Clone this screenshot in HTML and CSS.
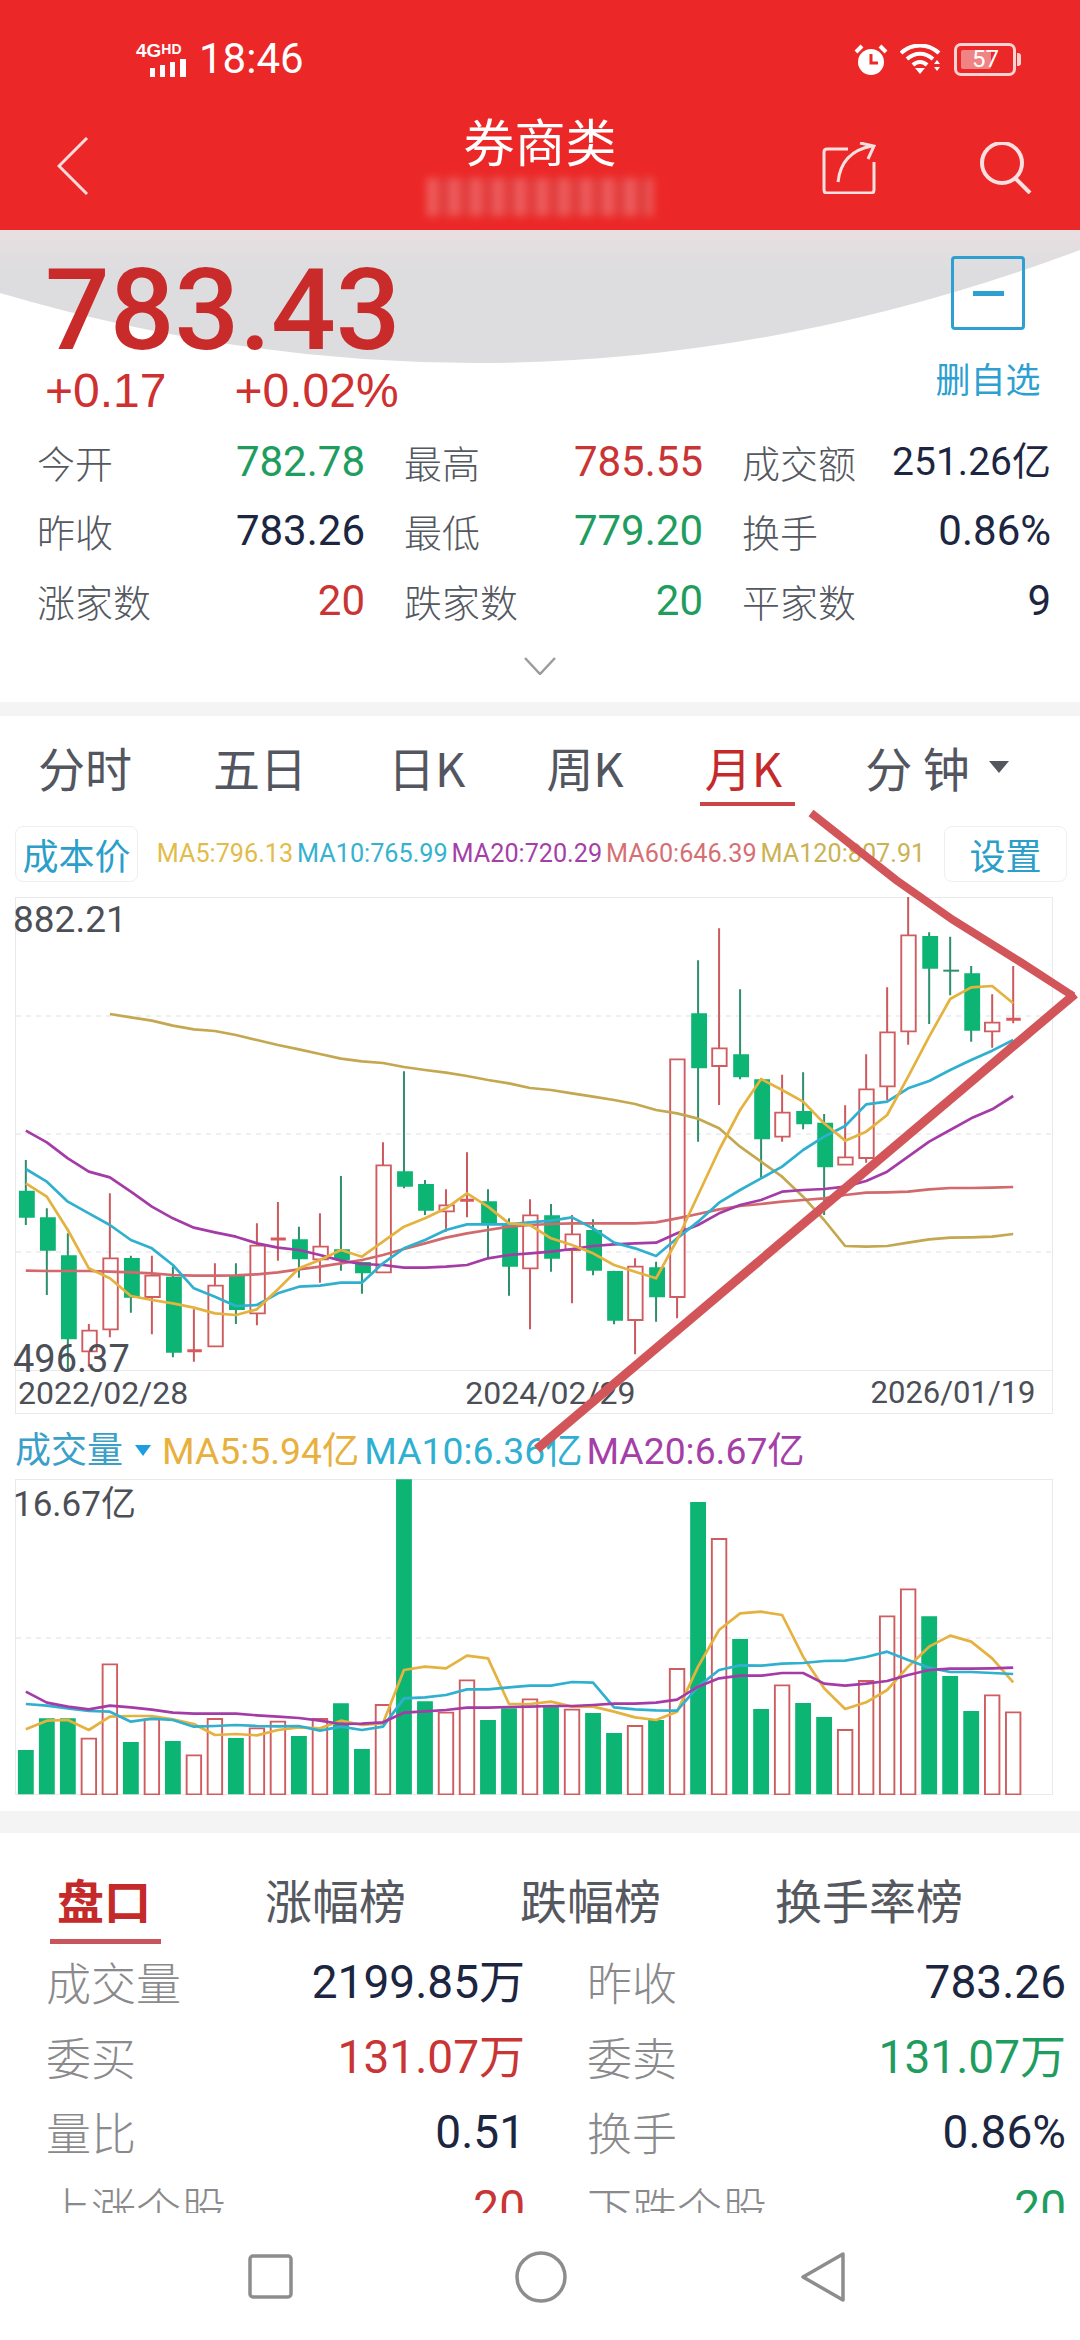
FILE: index.html
```html
<!DOCTYPE html>
<html lang="zh-CN">
<head>
<meta charset="utf-8">
<title>券商类</title>
<link rel="stylesheet" href="styles.css">
</head>
<body>
<div class="page">
  <header class="appbar">
    <div class="status">
      <div class="status-left">
        <div class="net">
          <span class="net-text">4G<sup class="net-hd">HD</sup></span>
          <svg class="bars" width="36" height="18" viewBox="0 0 36 18"><path d="M0 9h5v9H0zM10 6h5v12h-5zM20 3h5v15h-5zM30 0h6v18h-6z" fill="#fff"/></svg>
        </div>
        <span class="time">18:46</span>
      </div>
      <div class="status-right">
        <svg width="34" height="32" viewBox="0 0 34 32"><circle cx="17" cy="18" r="13" fill="#fff"/><path d="M17 10v9h7" fill="none" stroke="#ee2828" stroke-width="3"/><path d="M2 8 8 2M32 8 26 2" stroke="#fff" stroke-width="4"/></svg>
        <svg width="42" height="30" viewBox="0 0 42 30"><path d="M1 9C12-1 28-1 39 9M7 15c8-7 18-7 26 0M13 21c4-4 10-4 14 0" fill="none" stroke="#fff" stroke-width="4"/><path d="M15 24h10l-5 6z" fill="#fff"/><path d="M34 20l3-4 3 4zM34 23l3 4 3-4z" fill="#fff"/></svg>
        <div class="battery"><span class="battery-fill"></span><span class="battery-num">57</span></div>
      </div>
    </div>
    <div class="nav">
      <svg class="nav-back" width="32" height="58" viewBox="0 0 32 58"><path d="M30 1 2 29l28 28" fill="none" stroke="#f6dcdc" stroke-width="3"/></svg>
      <div class="nav-title">
        <h1 class="title">券商类</h1>
        <div class="smudge"></div>
      </div>
      <div class="nav-actions">
        <svg width="54" height="52" viewBox="0 0 54 52"><path d="M26 7H5Q2 7 2 10v38q0 3 3 3h44q3 0 3-3V20M16 40C18 22 28 8 50 4" fill="none" stroke="#f8e0e0" stroke-width="3"/><path d="M38 1l14 3-6 13" fill="none" stroke="#f8e0e0" stroke-width="3"/></svg>
        <svg width="52" height="52" viewBox="0 0 52 52"><circle cx="22" cy="21" r="20" fill="none" stroke="#f8e0e0" stroke-width="4"/><path d="M35 36l15 15" stroke="#f8e0e0" stroke-width="4"/></svg>
      </div>
    </div>
  </header>

  <section class="quote">
    <svg class="swoosh" width="1080" height="140" viewBox="0 0 1080 140">
      <defs><linearGradient id="sw" x1="0" y1="0" x2="0" y2="1"><stop offset="0" stop-color="#e9dfe2"/><stop offset=".3" stop-color="#dddddf"/></linearGradient></defs>
      <path d="M0 0H1080V20Q540 222 0 63Z" fill="url(#sw)"/>
    </svg>
    <div class="quote-head">
      <div>
        <div class="price">783.43</div>
        <div class="changes"><span>+0.17</span><span>+0.02%</span></div>
      </div>
      <div class="watch">
        <div class="watch-box"><span class="watch-minus"></span></div>
        <span class="watch-label">删自选</span>
      </div>
    </div>
    <div class="stats">
      <div class="stat"><span class="stat-label">今开</span><span class="stat-val up-g">782.78</span></div>
      <div class="stat"><span class="stat-label">最高</span><span class="stat-val up-r">785.55</span></div>
      <div class="stat"><span class="stat-label">成交额</span><span class="stat-val stat-wide">251.26亿</span></div>
      <div class="stat"><span class="stat-label">昨收</span><span class="stat-val">783.26</span></div>
      <div class="stat"><span class="stat-label">最低</span><span class="stat-val up-g">779.20</span></div>
      <div class="stat"><span class="stat-label">换手</span><span class="stat-val">0.86%</span></div>
      <div class="stat"><span class="stat-label">涨家数</span><span class="stat-val up-r">20</span></div>
      <div class="stat"><span class="stat-label">跌家数</span><span class="stat-val up-g">20</span></div>
      <div class="stat"><span class="stat-label">平家数</span><span class="stat-val">9</span></div>
    </div>
    <svg class="expand" width="32" height="18" viewBox="0 0 32 18"><path d="M1 1l15 16L31 1" fill="none" stroke="#9c9ca0" stroke-width="2.5"/></svg>
  </section>

  <div class="sep sep-a"></div>

  <nav class="tabs">
    <span class="tab">分时</span>
    <span class="tab">五日</span>
    <span class="tab">日K</span>
    <span class="tab">周K</span>
    <span class="tab tab-on">月K</span>
    <span class="tab tab-last">分 钟</span>
    <span class="tab-caret"></span>
  </nav>

  <div class="controls">
    <span class="ctl-btn">成本价</span>
    <div class="legend">
      <span class="c-y">MA5:796.13</span><span class="c-b">MA10:765.99</span><span class="c-p">MA20:720.29</span><span class="c-s">MA60:646.39</span><span class="c-o">MA120:807.91</span>
    </div>
    <span class="ctl-btn">设置</span>
  </div>

  <div class="chart price-chart">
    <svg class="chart-svg" width="1080" height="474" viewBox="0 897 1080 474">
      <rect class="frame" x="15.5" y="897.5" width="1037" height="473"/>
      <path class="dash" d="M16 1016H1052M16 1134H1052M16 1252H1052"/>
      <g transform="translate(0,880) scale(.34439 .33333)">
        <path class="wick-g" d="M75 840V1035M136 985V1245M197 1060V1475M380 1127V1298M502 1160V1432M685 1150V1332M868 1040V1193M990 888V1172M1051 1145V1241M1173 574V925M1234 900V1005M1417 928V1135M1478 1015V1247M1600 972V1175M1722 1018V1186M1783 1172V1333M1905 1145V1325M2027 241V785M2149 328V598M2210 597V895M2332 577V748M2393 702V1005M2698 157V432M2759 170V346M2820 258V485"/>
        <path class="wick-r" d="M258 1332V1460M319 940V1372M441 1127V1363M563 1288V1445M624 1150V1217M746 1030V1336M807 966V1142M929 1000V1208M1112 787V1178M1295 928V1055M1356 817V1012M1539 958V1348M1661 1005V1270M1844 1135V1423M1966 1252V1315M2088 145V675M2271 584V785M2454 676V855M2515 523V848M2576 322V660M2637 50V494M2881 343V503M2942 258V430"/>
        <path class="body-g" d="M55 932h46v81h-46zM116 1012h46v100h-46zM177 1126h46v252h-46zM360 1134h46v119h-46zM482 1190h46v228h-46zM665 1188h46v102h-46zM848 1078h46v60h-46zM970 1108h46v32h-46zM1031 1146h46v34h-46zM1153 874h46v46h-46zM1214 912h46v80h-46zM1397 964h46v66h-46zM1458 1030h46v130h-46zM1580 1006h46v130h-46zM1702 1050h46v122h-46zM1763 1173h46v149h-46zM1885 1162h46v90h-46zM2007 400h46v165h-46zM2129 523h46v69h-46zM2190 598h46v180h-46zM2312 693h46v40h-46zM2373 728h46v134h-46zM2678 168h46v98h-46zM2800 280h46v172h-46z"/>
        <path class="thin-g" d="M2739 272h46"/>
        <path class="body-r" d="M239 1352h42v62h-42zM300 1135h42v213h-42zM422 1187h42v64h-42zM605 1217h42v182h-42zM727 1097h42v203h-42zM910 1100h42v38h-42zM1093 856h42v321h-42zM1276 976h42v18h-42zM1519 1006h42v159h-42zM1642 1063h42v47h-42zM1824 1160h42v160h-42zM1946 538h42v713h-42zM2068 505h42v53h-42zM2251 698h42v72h-42zM2434 832h42v22h-42zM2495 628h42v206h-42zM2556 457h42v162h-42zM2617 166h42v288h-42zM2860 428h42v26h-42z"/>
        <path class="thin-r" d="M544 1412h42M786 1077h44M1336 961h40M2922 418h42"/>
        <polyline class="ma ma-o" points="319,402 380,412 441,422 502,437 563,448 624,453 685,465 746,480 807,495 868,508 929,522 990,536 1051,544 1112,549 1173,561 1234,570 1295,578 1356,588 1417,600 1478,610 1539,624 1600,630 1661,640 1722,650 1783,660 1844,672 1905,690 1966,700 2027,716 2088,745 2149,800 2210,845 2271,890 2332,950 2393,1020 2454,1098 2515,1100 2576,1098 2637,1088 2698,1078 2759,1073 2820,1072 2881,1070 2942,1062"/>
        <polyline class="ma ma-s" points="75,1172 136,1173 197,1173 258,1173 319,1175 380,1177 441,1180 502,1185 563,1187 624,1187 685,1186 746,1183 807,1177 868,1168 929,1160 990,1150 1051,1140 1112,1125 1173,1107 1234,1090 1295,1073 1356,1060 1417,1050 1478,1040 1539,1035 1600,1032 1661,1030 1722,1030 1783,1030 1844,1030 1905,1027 1966,1015 2027,1002 2088,988 2149,978 2210,972 2271,965 2332,960 2393,955 2454,945 2515,938 2576,937 2637,935 2698,928 2759,924 2820,924 2881,923 2942,921"/>
        <polyline class="ma ma-p" points="75,752 136,787 197,835 258,875 319,892 380,935 441,980 502,1015 563,1043 624,1057 685,1070 746,1090 807,1103 868,1110 929,1125 990,1142 1051,1152 1112,1155 1173,1163 1234,1163 1295,1160 1356,1155 1417,1135 1478,1125 1539,1120 1600,1115 1661,1107 1722,1098 1783,1093 1844,1090 1905,1088 1966,1060 2027,1035 2088,1000 2149,975 2210,960 2271,935 2332,930 2393,927 2454,920 2515,903 2576,875 2637,830 2698,785 2759,750 2820,715 2881,688 2942,648"/>
        <polyline class="ma ma-b" points="75,867 136,905 197,965 258,1000 319,1035 380,1080 441,1105 502,1155 563,1225 624,1250 685,1278 746,1275 807,1240 868,1220 929,1217 990,1208 1051,1208 1112,1150 1173,1105 1234,1080 1295,1050 1356,1033 1417,1033 1478,1033 1539,1027 1600,1022 1661,1012 1722,1045 1783,1088 1844,1105 1905,1128 1966,1075 2027,1025 2088,968 2149,930 2210,895 2271,860 2332,810 2393,770 2454,738 2515,673 2576,665 2637,625 2698,603 2759,570 2820,540 2881,512 2942,480"/>
        <polyline class="ma ma-y" points="75,910 136,950 197,1050 258,1165 319,1195 380,1248 441,1260 502,1270 563,1283 624,1300 685,1305 746,1288 807,1228 868,1165 929,1140 990,1110 1051,1130 1112,1085 1173,1040 1234,1015 1295,985 1356,940 1417,980 1478,1030 1539,1035 1600,1075 1661,1095 1722,1120 1783,1155 1844,1175 1905,1195 1966,1080 2027,945 2088,810 2149,690 2210,597 2271,630 2332,665 2393,730 2454,782 2515,755 2576,705 2637,590 2698,470 2759,357 2820,322 2881,318 2942,370"/>
      </g>
    </svg>
    <span class="axis axis-top">882.21</span>
    <span class="axis axis-bottom">496.37</span>
  </div>
  <div class="dates">
    <span>2022/02/28</span><span class="date-mid">2024/02/29</span><span class="date-end">2026/01/19</span>
  </div>

  <div class="vol-head">
    <span class="vol-title">成交量</span>
    <span class="vol-caret"></span>
    <span class="c-y2">MA5:5.94亿</span><span class="c-b2">MA10:6.36亿</span><span class="c-p2">MA20:6.67亿</span>
  </div>
  <div class="chart vol-chart">
    <svg class="chart-svg" width="1080" height="316" viewBox="0 1479 1080 316">
      <rect class="frame" x="15.5" y="1479.5" width="1037" height="315"/>
      <path class="dash" d="M16 1638H1052"/>
      <g transform="translate(0,1400) scale(.34439 .33333)">
        <path class="vol-g" d="M52 1050h46v133h-46zM113 955h46v228h-46zM174 955h46v228h-46zM357 1026h46v157h-46zM479 1023h46v160h-46zM662 1014h46v169h-46zM845 1008h46v175h-46zM967 910h46v273h-46zM1028 1047h46v136h-46zM1150 238h46v945h-46zM1211 904h46v279h-46zM1394 960h46v223h-46zM1455 925h46v258h-46zM1577 917h46v266h-46zM1699 939h46v244h-46zM1760 999h46v184h-46zM1882 960h46v223h-46zM2004 306h46v877h-46zM2126 717h46v466h-46zM2187 927h46v256h-46zM2309 909h46v274h-46zM2370 951h46v232h-46zM2675 649h46v534h-46zM2736 828h46v355h-46zM2797 933h46v250h-46z"/>
        <path class="body-r" d="M237 1016h42v167h-42zM298 793h42v390h-42zM420 958h42v225h-42zM542 1066h42v117h-42zM603 957h42v226h-42zM725 985h42v198h-42zM786 965h42v218h-42zM908 957h42v226h-42zM1091 915h42v268h-42zM1274 938h42v245h-42zM1335 841h42v342h-42zM1518 898h42v285h-42zM1640 929h42v254h-42zM1823 978h42v205h-42zM1945 807h42v376h-42zM2067 417h42v766h-42zM2250 856h42v327h-42zM2433 990h42v193h-42zM2494 843h42v340h-42zM2555 649h42v534h-42zM2616 568h42v615h-42zM2860 886h42v297h-42zM2921 937h42v246h-42z"/>
        <polyline class="ma ma-y" points="75,988 136,962 197,960 258,990 319,950 380,948 441,948 502,958 563,972 624,1005 685,1002 746,1006 807,990 868,982 929,985 990,962 1051,975 1112,970 1173,810 1234,800 1295,805 1356,767 1417,775 1478,912 1539,912 1600,905 1661,920 1722,920 1783,935 1844,952 1905,960 1966,935 2027,800 2088,690 2149,640 2210,635 2271,645 2332,770 2393,865 2454,927 2515,907 2576,870 2637,800 2698,740 2759,707 2820,725 2881,775 2942,847"/>
        <polyline class="ma ma-b" points="75,912 136,917 197,925 258,933 319,935 380,965 441,956 502,960 563,980 624,978 685,975 746,978 807,979 868,978 929,992 990,980 1051,990 1112,980 1173,895 1234,892 1295,885 1356,868 1417,868 1478,862 1539,857 1600,857 1661,846 1722,848 1783,922 1844,928 1905,931 1966,932 2027,860 2088,810 2149,796 2210,797 2271,791 2332,789 2393,783 2454,782 2515,771 2576,755 2637,780 2698,803 2759,816 2820,816 2881,819 2942,822"/>
        <polyline class="ma ma-p" points="75,875 136,908 197,920 258,928 319,917 380,922 441,929 502,938 563,941 624,941 685,941 746,946 807,950 868,954 929,962 990,972 1051,971 1112,967 1173,938 1234,934 1295,930 1356,923 1417,923 1478,921 1539,920 1600,918 1661,918 1722,915 1783,911 1844,911 1905,908 1966,899 2027,860 2088,835 2149,827 2210,827 2271,819 2332,819 2393,851 2454,857 2515,851 2576,843 2637,825 2698,810 2759,806 2820,806 2881,805 2942,803"/>
      </g>
    </svg>
    <span class="axis axis-vol">16.67亿</span>
  </div>

  <div class="sep sep-b"></div>

  <section class="board">
    <nav class="board-tabs">
      <span class="board-tab board-on">盘口</span>
      <span class="board-tab">涨幅榜</span>
      <span class="board-tab">跌幅榜</span>
      <span class="board-tab">换手率榜</span>
    </nav>
    <div class="rows">
      <div class="row"><span class="row-label">成交量</span><span class="row-val">2199.85万</span></div>
      <div class="row"><span class="row-label">昨收</span><span class="row-val">783.26</span></div>
      <div class="row"><span class="row-label">委买</span><span class="row-val up-r">131.07万</span></div>
      <div class="row"><span class="row-label">委卖</span><span class="row-val up-g">131.07万</span></div>
      <div class="row"><span class="row-label">量比</span><span class="row-val">0.51</span></div>
      <div class="row"><span class="row-label">换手</span><span class="row-val">0.86%</span></div>
      <div class="row"><span class="row-label">上涨个股</span><span class="row-val up-r">20</span></div>
      <div class="row"><span class="row-label">下跌个股</span><span class="row-val up-g">20</span></div>
    </div>
  </section>

  <footer class="sysnav">
    <svg width="45" height="45" viewBox="0 0 45 45"><rect x="2" y="2" width="41" height="41" rx="3" fill="none" stroke="#8d8d8d" stroke-width="3.5"/></svg>
    <svg width="52" height="52" viewBox="0 0 52 52"><circle cx="26" cy="26" r="24" fill="none" stroke="#8d8d8d" stroke-width="3.5"/></svg>
    <svg width="46" height="52" viewBox="0 0 46 52"><path d="M43 3 3 26l40 23z" fill="none" stroke="#8d8d8d" stroke-width="3.5" stroke-linejoin="round"/></svg>
  </footer>

  <svg class="marks" width="1080" height="2340" viewBox="0 0 1080 2340">
    <polyline points="811,813 896,880 953,920 1022,963 1073,996" fill="none" stroke="#d2555a" stroke-width="8"/>
    <polyline points="1075,994 537,1449" fill="none" stroke="#d2555a" stroke-width="9"/>
  </svg>
</div>
</body>
</html>
```
FILE: styles.css
```css
* { box-sizing: border-box; }
html, body { margin: 0; padding: 0; }
body { width: 1080px; height: 2340px; overflow: hidden; background: #fff; font-family: Roboto, "Noto Sans CJK SC", sans-serif; color: #1c2640; }
.page { position: relative; width: 1080px; height: 2340px; display: flex; flex-direction: column; overflow: hidden; }

/* app bar */
.appbar { height: 230px; background: #ec2727; color: #fff; display: flex; flex-direction: column; flex: none; }
.status { height: 100px; display: flex; justify-content: space-between; padding: 42px 58px 0 136px; }
.status-left { display: flex; gap: 13px; align-items: flex-start; }
.net { width: 50px; display: flex; flex-direction: column; align-items: flex-end; }
.net-text { font: 700 19px/17px "Liberation Sans", sans-serif; height: 17px; align-self: flex-start; white-space: nowrap; }
.net-hd { font-size: 14px; line-height: 13px; vertical-align: 3px; }
.bars { display: block; }
.time { font: 400 42px/36px Roboto, sans-serif; margin-top: -1px; }
.status-right { display: flex; gap: 12px; align-items: flex-start; padding-top: 2px; }
.battery { position: relative; width: 62px; height: 33px; margin-top: -1px; margin-right: 6px; border: 3px solid #f7d4d4; border-radius: 7px; }
.battery::after { content: ""; position: absolute; right: -8px; top: 7px; width: 4px; height: 13px; background: #f7d4d4; border-radius: 0 3px 3px 0; }
.battery-fill { position: absolute; left: 4px; top: 4px; bottom: 4px; width: 30px; background: #f08383; border-radius: 2px; }
.battery-num { position: absolute; left: 15px; top: 0; font: 400 24px/27px Roboto, sans-serif; color: #fff; }
.nav { height: 130px; display: grid; grid-template-columns: 1fr auto 1fr; padding: 0 48px; }
.nav-back { margin: 37px 0 0 9px; }
.nav-title { display: flex; flex-direction: column; align-items: center; }
.title { margin: 11px 0 0; font: 400 51px/58px "Noto Sans CJK SC", sans-serif; }
.smudge { width: 226px; height: 38px; margin-top: 9px; background: repeating-linear-gradient(90deg, #f2b0b0 0 9px, #e66a6a 9px 14px, #cf5456 14px 22px); filter: blur(4px); opacity: .42; }
.nav-actions { display: flex; justify-content: flex-end; gap: 104px; padding-top: 42px; }
.nav-actions svg { display: block; }

/* quote */
.quote { position: relative; height: 472px; flex: none; }
.swoosh { position: absolute; left: 0; top: 0; }
.quote-head { position: relative; display: flex; justify-content: space-between; padding: 24px 41px 0 45px; }
.price { font: 500 114px/112px Roboto, sans-serif; color: #c92a2a; }
.changes { display: flex; gap: 68px; font: 400 48px/50px "Liberation Sans", sans-serif; color: #cf3030; }
.watch { display: flex; flex-direction: column; align-items: center; width: 102px; margin-top: 2px; }
.watch-box { width: 74px; height: 74px; border: 3px solid #2d9fd0; border-radius: 4px; display: flex; justify-content: center; padding-top: 32px; }
.watch-minus { width: 31px; height: 5px; background: #2d9fd0; }
.watch-label { margin-top: 25px; font: 400 35px/46px "Noto Sans CJK SC", sans-serif; color: #2d9fd0; white-space: nowrap; }
.stats { position: relative; margin-top: 11px; padding-left: 37px; display: grid; grid-template-columns: 328px 299px 309px; column-gap: 39px; grid-auto-rows: 69.5px; }
.stat { display: flex; justify-content: space-between; align-items: center; }
.stat-label { font: 300 38px/50px "Noto Sans CJK SC", sans-serif; color: #54585f; }
.stat-val { font: 400 42px/50px Roboto, "Noto Sans CJK SC", sans-serif; color: #1c2640; }
.stat-wide { font-size: 39px; }
.up-g { color: #1f9d5f !important; }
.up-r { color: #c93535 !important; }
.expand { position: relative; display: block; margin: 21px auto 0; }

.sep { background: #f4f4f5; flex: none; }
.sep-a { height: 14px; }
.sep-b { height: 22px; margin-top: 16px; }

/* period tabs */
.tabs { height: 100px; flex: none; display: flex; align-items: flex-start; gap: 81px; padding: 21px 0 0 38px; }
.tab { position: relative; font: 400 47px/60px "Noto Sans CJK SC", Roboto, sans-serif; color: #53565f; white-space: nowrap; }
.tab-last { margin-left: 2px; }
.tab-on { color: #c42a2a; }
.tab-on::after { content: ""; position: absolute; left: -5px; right: -13px; bottom: -9px; height: 4px; background: #c9454a; }
.tab-caret { width: 0; height: 0; margin: 24px 0 0 -62px; border: 10px solid transparent; border-top: 12px solid #55575f; border-bottom: 0; }

.controls { height: 56px; margin-top: 10px; flex: none; display: flex; justify-content: space-between; align-items: center; padding: 0 13px 0 15px; }
.ctl-btn { width: 123px; height: 56px; border: 1px solid #efefef; border-radius: 8px; display: flex; align-items: center; justify-content: center; font: 400 36px/1 "Noto Sans CJK SC", sans-serif; color: #2b9fc9; white-space: nowrap; }
.legend { display: flex; gap: 4px; font: 400 25.2px/30px Roboto, sans-serif; white-space: nowrap; }
.c-y { color: #e2bc4a; }
.c-b { color: #35b2d0; }
.c-p { color: #a53fa8; }
.c-s { color: #d56f73; }
.c-o { color: #cbb254; }

/* charts */
.chart { position: relative; flex: none; }
.chart-svg { display: block; }
.price-chart { margin-top: 15px; height: 474px; }
.vol-chart { height: 316px; }
.frame { fill: #fff; stroke: #e9e9ec; stroke-width: 1; }
.dash { fill: none; stroke: #dddfe3; stroke-width: 1; stroke-dasharray: 5 5; }
.wick-g, .wick-r, .body-r, .thin-r, .thin-g, .ma { vector-effect: non-scaling-stroke; fill: none; }
.wick-g { stroke: #2f8f6c; stroke-width: 2; }
.wick-r { stroke: #cb5a5e; stroke-width: 2; }
.body-g, .vol-g { fill: #0db574; }
.body-r { fill: #fff; stroke: #cf5d60; stroke-width: 1.9; }
.thin-r { stroke: #d9585c; stroke-width: 3; }
.thin-g { stroke: #2f8f6c; stroke-width: 2; }
.ma { stroke-width: 2.7; stroke-linejoin: round; }
.ma-y { stroke: #e5b23f; }
.ma-b { stroke: #2fb0cf; }
.ma-p { stroke: #a43ba6; }
.ma-s { stroke: #d2696d; }
.ma-o { stroke: #c4a850; }
.axis { position: absolute; left: 13px; font: 400 37px/40px Roboto, "Noto Sans CJK SC", sans-serif; color: #4d4f57; }
.axis-top { top: 3px; }
.axis-bottom { bottom: -8px; font-size: 38px; }
.axis-vol { top: 6px; font-size: 35px; }
.dates { width: 1038px; height: 43px; margin-left: 15px; flex: none; display: flex; padding: 3px 0 0 2px; border: 1px solid #e9e9ec; border-top: 0; font: 400 32px/38px Roboto, sans-serif; color: #4d4f57; }
.date-mid { margin-left: 277px; }
.date-end { margin-left: 235px; font-size: 31px; }
.vol-head { height: 65px; flex: none; display: flex; align-items: center; padding: 8px 0 0 15px; font: 400 37.3px/44px Roboto, "Noto Sans CJK SC", sans-serif; white-space: nowrap; }
.vol-title { font-size: 36px; color: #3aa0c8; }
.vol-caret { width: 0; height: 0; margin: 0 11px 0 12px; border: 8px solid transparent; border-top: 11px solid #1e9de0; border-bottom: 0; }
.c-y2 { color: #e8b03e; margin-right: 5px; }
.c-b2 { color: #2fb0d2; margin-right: 4px; }
.c-p2 { color: #a53fa8; }

/* order-book board */
.board { height: 380px; flex: none; overflow: hidden; padding-top: 36px; }
.board-tabs { display: flex; gap: 114px; padding-left: 57px; }
.board-tab { position: relative; font: 400 47px/60px "Noto Sans CJK SC", sans-serif; color: #55585f; white-space: nowrap; }
.board-on { font-weight: 700; color: #c42a2a; }
.board-on::after { content: ""; position: absolute; left: -7px; right: -10px; bottom: -15px; height: 5px; background: #c9555a; }
.rows { margin-top: 15px; padding-left: 46px; display: grid; grid-template-columns: 479px 479px; column-gap: 62px; grid-auto-rows: 75px; }
.row { display: flex; justify-content: space-between; align-items: center; }
.row-label { font: 300 45px/60px "Noto Sans CJK SC", sans-serif; color: #8a8a8c; }
.row-val { font: 400 46px/60px Roboto, "Noto Sans CJK SC", sans-serif; color: #1c2640; }

.sysnav { height: 127px; flex: none; display: flex; align-items: center; padding-left: 248px; }
.sysnav svg:nth-child(2) { margin-left: 222px; }
.sysnav svg:nth-child(3) { margin-left: 233px; }

/* hand-drawn annotation over the chart */
.marks { position: absolute; left: 0; top: 0; pointer-events: none; }
```
